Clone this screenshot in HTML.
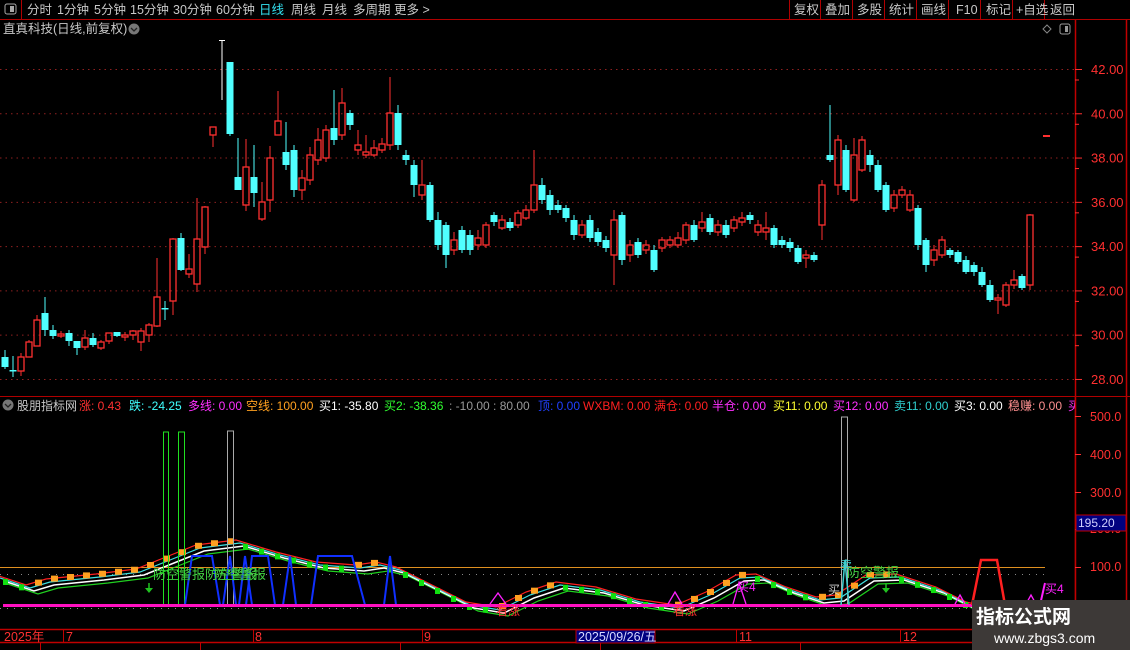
<!DOCTYPE html>
<html><head><meta charset="utf-8">
<style>
html,body{margin:0;padding:0;background:#000;width:1130px;height:650px;overflow:hidden;font-family:"Liberation Sans","Noto Sans CJK SC",sans-serif;}
svg{position:absolute;left:0;top:0}
text{font-family:"Liberation Sans","Noto Sans CJK SC",sans-serif}
</style></head><body>
<svg id="s" width="1130" height="650" viewBox="0 0 1130 650" xmlns="http://www.w3.org/2000/svg">
<rect width="1130" height="650" fill="#000"/>
<line x1="0" y1="19.5" x2="1130" y2="19.5" stroke="#b00000"/>
<line x1="21.5" y1="0" x2="21.5" y2="19" stroke="#b00000"/>
<rect x="5" y="4" width="11" height="10" rx="2" fill="none" stroke="#aaa"/><rect x="10" y="6" width="4" height="6" fill="#aaa"/>
<g font-size="12.5" fill="#c8c8c8">
<text x="27" y="14">分时</text><text x="57" y="14">1分钟</text><text x="94" y="14">5分钟</text><text x="130" y="14">15分钟</text><text x="173" y="14">30分钟</text><text x="216" y="14">60分钟</text>
<text x="259" y="14" fill="#33e0f0">日线</text><text x="291" y="14">周线</text><text x="322" y="14">月线</text><text x="353" y="14">多周期</text><text x="394" y="14">更多 &gt;</text>
</g>
<g stroke="#b00000"><line x1="789.5" y1="0" x2="789.5" y2="19"/><line x1="820.5" y1="0" x2="820.5" y2="19"/><line x1="852.5" y1="0" x2="852.5" y2="19"/><line x1="884.5" y1="0" x2="884.5" y2="19"/><line x1="916.5" y1="0" x2="916.5" y2="19"/><line x1="948.5" y1="0" x2="948.5" y2="19"/><line x1="980.5" y1="0" x2="980.5" y2="19"/><line x1="1012.5" y1="0" x2="1012.5" y2="19"/><line x1="1044.5" y1="0" x2="1044.5" y2="19"/></g>
<g font-size="12.5" fill="#c8c8c8">
<text x="794" y="14">复权</text><text x="825" y="14">叠加</text><text x="857" y="14">多股</text><text x="889" y="14">统计</text><text x="921" y="14">画线</text><text x="956" y="14">F10</text><text x="986" y="14">标记</text><text x="1016" y="14">+自选</text><text x="1050" y="14">返回</text>
</g>
<text x="3" y="33" font-size="12.5" fill="#c8c8c8">直真科技(日线,前复权)</text>
<circle cx="134" cy="29" r="5.5" fill="#777"/><path d="M131 28 l3 3 l3 -3" stroke="#222" fill="none" stroke-width="1.3"/>
<path d="M1047 25 l4 4 l-4 4 l-4 -4z" fill="none" stroke="#888"/>
<rect x="1060" y="24" width="10" height="10" rx="2" fill="none" stroke="#999"/><rect x="1065" y="26" width="3" height="6" fill="#999"/>
<line x1="1075.5" y1="20" x2="1075.5" y2="630" stroke="#c00000" stroke-width="1.5"/>
<line x1="1126.5" y1="20" x2="1126.5" y2="650" stroke="#c00000" stroke-width="1.5"/>
<line x1="0" y1="396.5" x2="1130" y2="396.5" stroke="#b00000"/>
<g id="grid"></g>
<g id="candles"></g>
<circle cx="8" cy="405" r="5.5" fill="#777"/><path d="M5 404 l3 3 l3 -3" stroke="#222" fill="none" stroke-width="1.3"/>
<text x="17" y="410" font-size="12" fill="#c8c8c8">股朋指标网</text>
<text y="410" font-size="12"><tspan x="79" fill="#ff3030">涨: 0.43</tspan><tspan x="129" fill="#40ffff">跌: -24.25</tspan><tspan x="188" fill="#ff30ff">多线: 0.00</tspan><tspan x="246" fill="#ffa020">空线: 100.00</tspan><tspan x="319" fill="#ffffff">买1: -35.80</tspan><tspan x="384" fill="#30ff30">买2: -38.36</tspan><tspan x="449" fill="#999">: -10.00 : 80.00</tspan><tspan x="538" fill="#2040ff">顶: 0.00</tspan><tspan x="583" fill="#ff2020">WXBM: 0.00</tspan><tspan x="654" fill="#ff2020">满仓: 0.00</tspan><tspan x="712" fill="#ff30ff">半仓: 0.00</tspan><tspan x="773" fill="#ffff30">买11: 0.00</tspan><tspan x="833" fill="#ff30ff">买12: 0.00</tspan><tspan x="894" fill="#30d0d0">卖11: 0.00</tspan><tspan x="954" fill="#fff">买3: 0.00</tspan><tspan x="1008" fill="#ff9090">稳赚: 0.00</tspan><tspan x="1068" fill="#ff30ff">买</tspan></text>
<rect x="1075" y="397" width="55" height="233" fill="#000"/>
<line x1="1075.5" y1="397" x2="1075.5" y2="630" stroke="#c00000" stroke-width="1.5"/>
<line x1="1126.5" y1="397" x2="1126.5" y2="650" stroke="#c00000" stroke-width="1.5"/>
<g font-size="12.5" fill="#ff3030">
<text x="1090" y="421">500.0</text><text x="1090" y="459">400.0</text><text x="1090" y="497">300.0</text><text x="1090" y="533">200.0</text><text x="1090" y="571">100.0</text>
</g>
<g stroke="#ff3030"><line x1="1075" y1="416.5" x2="1081" y2="416.5"/><line x1="1075" y1="454.5" x2="1081" y2="454.5"/><line x1="1075" y1="492.5" x2="1081" y2="492.5"/><line x1="1075" y1="529.5" x2="1081" y2="529.5"/><line x1="1075" y1="567.5" x2="1081" y2="567.5"/></g>
<rect x="1076" y="515" width="50" height="16" fill="#000080" stroke="#c00000"/>
<text x="1078" y="527" font-size="12" fill="#d0d0ff">195.20</text>
<g id="ind"></g>
<line x1="0" y1="629.5" x2="1130" y2="629.5" stroke="#c00000" stroke-width="1.5"/>
<line x1="0" y1="642.5" x2="1130" y2="642.5" stroke="#c00000" stroke-width="1.5"/>
<g stroke="#c00000"><line x1="63.5" y1="630" x2="63.5" y2="642"/><line x1="253.5" y1="630" x2="253.5" y2="642"/><line x1="422.5" y1="630" x2="422.5" y2="642"/><line x1="736.5" y1="630" x2="736.5" y2="642"/><line x1="900.5" y1="630" x2="900.5" y2="642"/><line x1="40.5" y1="643" x2="40.5" y2="650"/><line x1="200.5" y1="643" x2="200.5" y2="650"/><line x1="400.5" y1="643" x2="400.5" y2="650"/><line x1="600.5" y1="643" x2="600.5" y2="650"/><line x1="800.5" y1="643" x2="800.5" y2="650"/></g>
<g font-size="12.5" fill="#ff3030"><text x="4" y="641">2025年</text><text x="66" y="641">7</text><text x="255" y="641">8</text><text x="424" y="641">9</text><text x="739" y="641">11</text><text x="903" y="641">12</text></g>
<rect x="576" y="630" width="79" height="13" fill="#000080" stroke="#c00000"/>
<text x="578" y="641" font-size="12.5" fill="#d8d8ff">2025/09/26/五</text>
<rect x="972" y="600" width="158" height="50" fill="#3d3937"/>
<text x="976" y="623" font-size="19" font-weight="bold" fill="#fff">指标公式网</text>
<text x="994" y="643" font-size="14" fill="#fff">www.zbgs3.com</text>
</svg>
<script>
const NS="http://www.w3.org/2000/svg";
function el(p,t,a,txt){const e=document.createElementNS(NS,t);for(const k in a)e.setAttribute(k,a[k]);if(txt)e.textContent=txt;document.getElementById(p).appendChild(e);return e;}
const levels=[42,40,38,36,34,32,30,28];
levels.forEach(p=>{const y=69+(42-p)*22.14;
 el('grid','line',{x1:0,x2:1075,y1:y+.5,y2:y+.5,stroke:'#902020','stroke-dasharray':'1.5 4'});
 el('grid','line',{x1:1075,x2:1082,y1:y+.5,y2:y+.5,stroke:'#ff3030'});
 el('grid','text',{x:1091,y:y+5,'font-size':13,fill:'#ff3030'},p.toFixed(2));
 const ym=y+11;if(p>28)el('grid','line',{x1:1075,x2:1079,y1:ym,y2:ym,stroke:'#ff3030'});
});
const C=[[5,357,367,'c',350,369],[13,370,371,'c',356,377],[21,357,371,'r',353,376],[29,342,357,'r',340,357],[37,320,346,'r',315,346],[45,313,330,'c',297,336],[53,330,336,'c',325,339],[61,334,336,'r',331,338],[69,333,341,'c',330,346],[77,341,348,'c',341,355],[85,338,347,'r',330,350],[93,338,345,'c',333,347],[101,342,348,'r',340,350],[109,333,341,'r',333,344],[117,332,336,'c',332,337],[125,335,337,'r',332,341],[133,331,335,'r',330,340],[141,331,342,'r',328,351],[149,325,335,'r',323,342],[157,297,326,'r',258,327],[165,308,309,'c',301,320],[173,239,301,'r',238,315],[181,238,270,'c',233,271],[189,269,274,'r',254,278],[197,239,284,'r',198,292],[205,207,247,'r',206,254],[213,127,135,'r',127,147],[230,62,134,'c',62,136],[238,177,190,'c',138,190],[246,167,205,'r',139,211],[254,177,193,'c',145,207],[262,202,219,'r',182,221],[270,158,200,'r',146,212],[278,121,135,'r',91,135],[286,152,165,'c',122,170],[294,150,190,'c',145,197],[302,178,190,'r',170,200],[310,155,180,'r',147,185],[318,140,160,'r',128,165],[326,130,158,'r',125,162],[334,128,140,'c',90,145],[342,103,135,'r',88,140],[350,113,125,'c',110,130],[358,145,150,'r',130,155],[366,152,155,'r',135,158],[374,148,155,'r',140,157],[382,144,150,'r',138,153],[390,113,145,'r',77,150],[398,113,145,'c',105,150],[406,155,160,'c',150,165],[414,165,185,'c',160,197],[422,185,195,'r',160,200],[430,185,220,'c',182,222],[438,220,245,'c',212,250],[446,225,255,'c',222,268],[454,240,250,'r',232,255],[462,230,250,'c',226,253],[470,235,250,'c',230,255],[478,238,245,'r',230,250],[486,225,245,'r',222,248],[494,215,222,'c',212,226],[502,220,228,'r',215,230],[510,222,228,'c',218,231],[518,213,225,'r',210,228],[526,210,218,'r',205,220],[534,185,210,'r',150,213],[542,185,200,'c',178,204],[550,195,210,'c',190,215],[558,205,210,'c',200,213],[566,208,218,'c',205,222],[574,220,235,'c',215,240],[582,225,235,'r',220,238],[590,220,238,'c',215,242],[598,232,242,'c',228,246],[606,240,248,'c',236,252],[614,220,255,'r',210,285],[622,215,260,'c',212,265],[630,245,255,'r',240,262],[638,242,255,'c',238,258],[646,245,250,'r',240,254],[654,250,270,'c',245,272],[662,240,248,'r',237,252],[670,240,245,'r',236,248],[678,238,245,'r',232,248],[686,225,240,'r',222,244],[694,225,240,'c',220,242],[702,222,228,'r',212,232],[710,218,232,'c',214,235],[718,225,232,'r',220,236],[726,225,235,'c',220,238],[734,220,228,'r',216,232],[742,218,222,'r',212,226],[750,215,220,'c',212,224],[758,225,232,'r',220,236],[766,228,232,'r',212,240],[774,228,245,'c',225,248],[782,240,245,'c',236,248],[790,242,248,'c',238,252],[798,248,262,'c',245,264],[806,255,258,'r',250,268],[814,255,260,'c',252,262],[822,185,225,'r',180,240],[830,155,160,'c',105,162],[838,140,185,'r',135,195],[846,150,190,'c',145,192],[854,155,200,'r',138,202],[862,140,170,'r',136,172],[870,155,165,'c',150,172],[878,165,190,'c',160,192],[886,185,210,'c',182,212],[894,195,208,'r',190,212],[902,190,195,'r',186,198],[910,195,210,'r',190,212],[918,208,245,'c',205,250],[926,240,265,'c',238,272],[934,250,260,'r',245,266],[942,240,255,'r',236,258],[950,250,255,'c',248,258],[958,252,262,'c',250,264],[966,260,272,'c',256,274],[974,265,272,'c',262,276],[982,272,285,'c',267,287],[990,285,300,'c',280,302],[998,298,300,'r',294,314],[1006,285,305,'r',282,307],[1014,280,285,'r',270,289],[1022,276,288,'c',274,290],[1030,215,285,'r',214,290]];
C.forEach(([x,t,b,c,wt,wb])=>{const col=c=='r'?'#ff3030':'#50ffff';
 el('candles','line',{x1:x,x2:x,y1:wt,y2:t,stroke:col});el('candles','line',{x1:x,x2:x,y1:b,y2:wb,stroke:col});
 if(c=='r')el('candles','rect',{x:x-3,y:t,width:6,height:Math.max(b-t,1),fill:'none',stroke:col,'stroke-width':1.3});
 else el('candles','rect',{x:x-3.5,y:t,width:7,height:Math.max(b-t,1.5),fill:col});});
el('candles','line',{x1:222,x2:222,y1:40,y2:100,stroke:'#fff'});el('candles','line',{x1:219,x2:225,y1:40.5,y2:40.5,stroke:'#fff'});
el('candles','line',{x1:1043,x2:1050,y1:136,y2:136,stroke:'#ff3030','stroke-width':2});
el('ind','line',{x1:0,x2:1045,y1:567.5,y2:567.5,stroke:'#e09020'});
el('ind','line',{x1:0,x2:1045,y1:574.5,y2:574.5,stroke:'#888','stroke-dasharray':'1 6'});
el('ind','line',{x1:0,x2:1075,y1:608.5,y2:608.5,stroke:'#888','stroke-dasharray':'1 6'});
const W=[[0,578],[30,588],[50,582],[100,577],[140,572],[170,560],[200,548],[240,543],[280,555],[320,565],[360,568],[380,565],[400,570],[430,585],[470,605],[500,610],[530,595],[560,585],[600,590],[640,602],[680,608],[710,595],[740,578],[760,577],[790,590],[820,600],[840,598],[870,578],[900,577],[940,590],[970,605],[1000,612]];
function pl(off,dx){return W.map(([x,y])=>(x+dx)+','+(y+off)).join(' ');}
el('ind','polyline',{points:pl(6,8),fill:'none',stroke:'#20d020','stroke-width':1.2});
el('ind','polyline',{points:pl(3,4),fill:'none',stroke:'#fff','stroke-width':1.5});
el('ind','polyline',{points:pl(0,0),fill:'none',stroke:'#40e0e0','stroke-width':1.2});
el('ind','polyline',{points:pl(-3,-4),fill:'none',stroke:'#ff2020','stroke-width':1.2});
function yAt(x){for(let i=0;i<W.length-1;i++){if(x>=W[i][0]&&x<=W[i+1][0]){const f=(x-W[i][0])/(W[i+1][0]-W[i][0]);return W[i][1]+f*(W[i+1][1]-W[i][1]);}}return 610;}
for(let x=6;x<1000;x+=16){const y=yAt(x),yn=yAt(x+8);const up=yn<y;el('ind','rect',{x:x-3,y:up?y-6:y-1,width:up?7:5,height:up?6:6,fill:up?'#ffa020':'#10e010'});}
[[163,168,432,'#20e020'],[178,184,432,'#20e020'],[227,233,431,'#aaa'],[841,847,417,'#aaa']].forEach(([a,b,t,c])=>el('ind','rect',{x:a+.5,y:t,width:b-a,height:605-t,fill:'none',stroke:c}));
['M185,605 L192,556 L212,556 L220,605','M223,605 L230,556 L236,605','M239,605 L245,556 L252,605','M246,605 L252,556 L268,556 L275,605','M283,605 L290,556 L296,605','M311,605 L318,556 L352,556 L365,605','M384,605 L390,556 L396,605'].forEach(d=>el('ind','path',{d:d,fill:'none',stroke:'#1030ff','stroke-width':2}));
el('ind','line',{x1:3,x2:1075,y1:605.5,y2:605.5,stroke:'#ff10c0','stroke-width':3});
['M490,604 L498,593 L506,604','M668,604 L675,592 L682,604','M733,604 L739,583 L746,604','M955,604 L960,595 L965,604','M1026,604 L1031,595 L1036,604'].forEach(d=>el('ind','path',{d:d,fill:'none',stroke:'#ff20ff','stroke-width':1.3}));
el('ind','path',{d:'M1040,605 L1045,583',fill:'none',stroke:'#ff20ff','stroke-width':2});
el('ind','text',{x:1045,y:593,'font-size':12,fill:'#ff20ff'},'买4');
el('ind','text',{x:737,y:591,'font-size':12,fill:'#ff20ff'},'买4');
el('ind','path',{d:'M972,605 L981,560 L997,560 L1005,605',fill:'none',stroke:'#ff2020','stroke-width':2.5});
el('ind','text',{x:153,y:579,'font-size':13,fill:'#40d040'},'防空警报防空警报');
el('ind','text',{x:214,y:579,'font-size':13,fill:'#40d040'},'防空警报');
el('ind','text',{x:847,y:577,'font-size':13,fill:'#40d040'},'防空警报');
el('ind','text',{x:840,y:569,'font-size':12,fill:'#40d0d0'},'卖');
el('ind','text',{x:828,y:594,'font-size':12,fill:'#ccc'},'买');
el('ind','text',{x:496,y:615,'font-size':12,fill:'#ff3030'},'看涨');
el('ind','text',{x:673,y:615,'font-size':12,fill:'#ff3030'},'看涨');
[[149,583],[886,583]].forEach(([x,y])=>{el('ind','line',{x1:x,x2:x,y1:y,y2:y+5,stroke:'#20c020','stroke-width':1.5});el('ind','path',{d:`M${x-4},${y+5} L${x+4},${y+5} L${x},${y+10}z`,fill:'#20c020'});});
el('ind','path',{d:'M841,605 L845,560 L849,605',fill:'none',stroke:'#40d0d0','stroke-width':1.5});
</script>
</body></html>
